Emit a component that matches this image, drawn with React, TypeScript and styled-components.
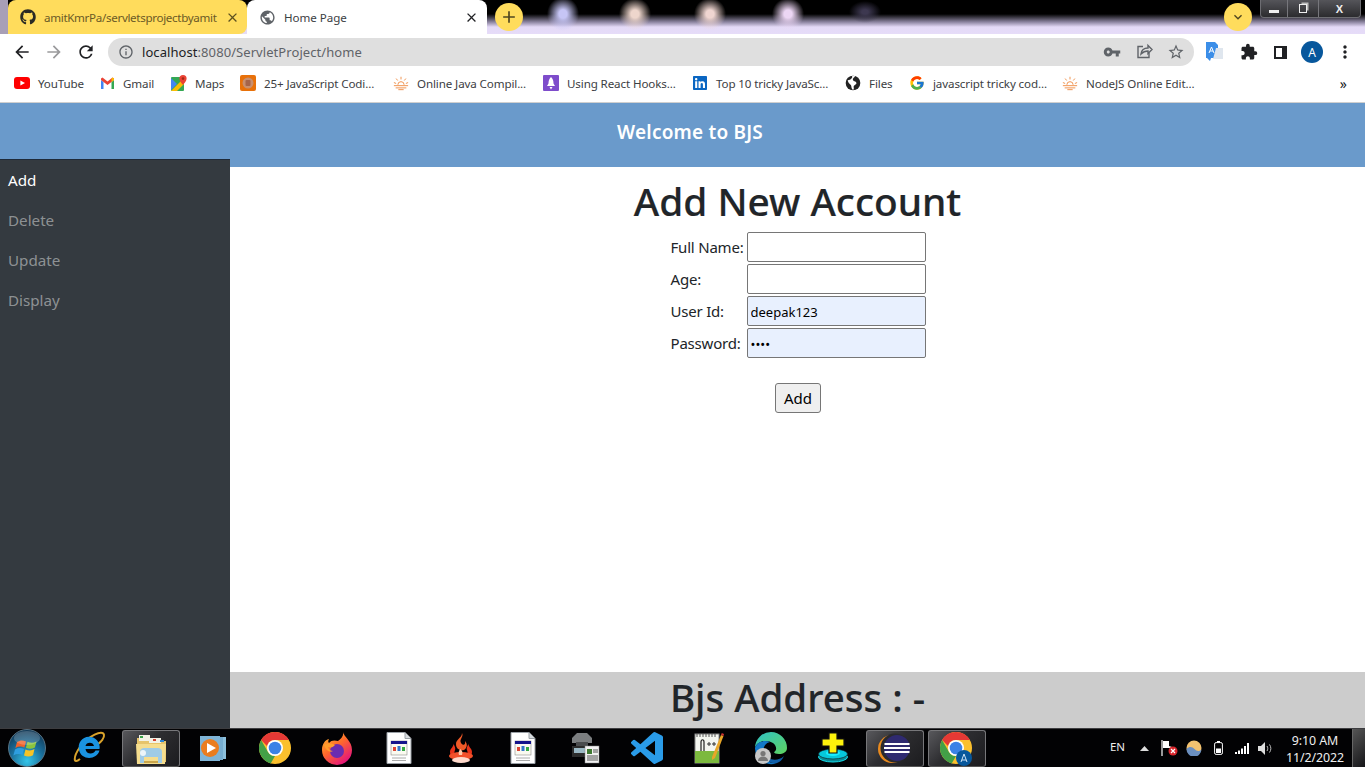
import React from "react";
import styled, { createGlobalStyle } from "styled-components";
import { FaGithub, FaLinkedin } from "react-icons/fa";
import { FcGoogle } from "react-icons/fc";
import { MdArrowBack, MdArrowForward, MdRefresh, MdInfoOutline, MdPublic, MdClose, MdAdd, MdStarBorder, MdVpnKey, MdKeyboardArrowDown, MdMoreVert, MdExtension } from "react-icons/md";

const FONT = `"Noto Sans", "Open Sans", "Liberation Sans", sans-serif`;

const Global = createGlobalStyle`
  html, body { margin: 0; padding: 0; height: 100%; overflow: hidden; }
  #root { height: 100%; }
  * { box-sizing: border-box; }
  body { font-family: ${FONT}; }
`;

const Screen = styled.div`display:flex;flex-direction:column;height:767px;width:1365px;overflow:hidden;background:#fff;`;

/* browser chrome */
const TabStrip = styled.div`
  height:34px;display:flex;align-items:stretch;padding-left:8px;position:relative;
  background:
    radial-gradient(ellipse 16px 17px at 563px 14px, #c6c5f5 25%, rgba(198,197,245,0) 100%),
    radial-gradient(ellipse 16px 16px at 635px 14px, #eed6cc 25%, rgba(238,214,204,0) 100%),
    radial-gradient(ellipse 16px 16px at 710px 14px, #efd5d0 25%, rgba(239,213,208,0) 100%),
    radial-gradient(ellipse 16px 16px at 788px 14px, #ecd6f4 25%, rgba(236,214,244,0) 100%),
    radial-gradient(ellipse 16px 11px at 865px 12px, #3d3850 20%, rgba(61,56,80,0) 100%),
    linear-gradient(90deg, #a89fb6 0, #a89fb6 8px, transparent 8px),
    linear-gradient(180deg, #000 0, #000 14px, #8c84a0 22px, #e4daf7 27px, #e6dcf8 34px);
`;
const Tab = styled.div<{ $active?: boolean }>`
  display:flex;align-items:center;font-size:11.6px;white-space:nowrap;
  width:${p => (p.$active ? 240 : 239)}px;
  padding:${p => (p.$active ? "0 8px 0 12px" : "0 7px 0 12px")};
  background:${p => (p.$active ? "#fff" : "#ffdc5c")};
  color:${p => (p.$active ? "#3c4043" : "#6b5a26")};
  border-radius:${p => (p.$active ? "8px 8px 0 0" : "8px 8px 8px 0")};
`;
const TabTitle = styled.span<{ $tight?: boolean }>`
  flex:1;margin-left:8px;letter-spacing:${p => (p.$tight ? "-0.32px" : "-0.05px")};
`;
const RoundBtn = styled.div<{ $size?: number }>`
  width:28px;height:28px;border-radius:50%;background:#ffdc5c;display:flex;align-items:center;justify-content:center;
  color:#4f4520;margin:3px 0 0 8px;font-size:${p => p.$size ?? 20}px;
`;
const Spring = styled.div`flex:1;`;
const CollapseBtn = styled(RoundBtn)`margin:3px 8px 0 0;`;
const WinControls = styled.div`
  display:flex;width:101px;height:18px;margin-right:4px;border:1px solid #6d6d72;border-top:none;border-radius:0 0 4px 4px;
  background:linear-gradient(180deg,#55555a,#2b2b2e);color:#eee;overflow:hidden;
`;
const WinBtn = styled.div<{ $w: number }>`
  width:${p => p.$w}px;display:flex;align-items:center;justify-content:center;border-right:1px solid #77777c;
  font-size:11px;font-weight:700;font-family:"Liberation Sans",sans-serif;
  &:last-child{border-right:none;}
`;
const MinGlyph = styled.div`width:10px;height:3px;background:#eee;margin-top:6px;`;
const RestoreGlyph = styled.div`
  width:8px;height:9px;border:1.5px solid #eee;box-shadow:2px -2px 0 -0.5px #bbb;
`;

const Toolbar = styled.div`height:34px;display:flex;align-items:center;background:#fff;padding:2px 0 0 6px;color:#3a3a3c;`;
const NavIcon = styled.div<{ $muted?: boolean }>`
  width:32px;display:flex;align-items:center;justify-content:center;font-size:20px;color:${p => (p.$muted ? "#9a9a9c" : "#202124")};
`;
const Omnibox = styled.div`
  width:1086px;height:28px;margin-left:6px;background:#dfdfdf;border-radius:14px;display:flex;align-items:center;padding:0 2px 0 10px;
  font-size:13px;color:#5f6368;
`;
const UrlHost = styled.span`color:#202124;`;
const UrlText = styled.span`margin-left:8px;flex:1;letter-spacing:0.07px;`;
const OmniIcon = styled.div`width:32px;display:flex;justify-content:center;color:#5f6368;font-size:18px;`;
const ExtArea = styled.div`display:flex;align-items:center;margin-left:auto;padding-right:4px;`;
const ExtIcon = styled.div`width:32px;display:flex;justify-content:center;align-items:center;font-size:18px;color:#202124;`;
const TranslateCell = styled(ExtIcon)`padding-right:6px;`;
const PanelGlyph = styled.div`width:13px;height:13px;border:2px solid #202124;border-right-width:5px;margin-right:2px;`;
const Avatar = styled.div`width:22px;height:22px;border-radius:50%;background:#07579c;color:#fff;font-size:12px;display:flex;align-items:center;justify-content:center;margin-right:2px;`;

const Bookmarks = styled.div`height:35px;display:flex;align-items:center;padding-left:14px;background:#fff;border-bottom:1px solid #cfcfcf;padding-bottom:4px;`;
const Bookmark = styled.div<{ $w: number }>`
  width:${p => p.$w}px;display:flex;align-items:center;font-size:11.6px;color:#3c4043;white-space:nowrap;flex:none;
`;
const BookmarkIcon = styled.div`width:16px;height:16px;display:flex;align-items:center;justify-content:center;flex:none;font-size:16px;`;
const BookmarkLabel = styled.span`margin-left:8px;letter-spacing:-0.12px;`;
const More = styled.div`margin-left:auto;margin-right:18px;font-size:14px;color:#202124;`;

/* page */
const Page = styled.div`
  flex:1;display:grid;grid-template-columns:230px 1fr;grid-template-rows:56px 8px 1fr;min-height:0;
`;
const Banner = styled.header`
  grid-column:1 / 3;grid-row:1 / 3;background:#6a9acb;color:#fff;display:flex;align-items:center;justify-content:center;
  padding:0 0 6px 15px;font-size:19px;font-weight:600;letter-spacing:0.2px;
`;
const Sidebar = styled.nav`
  grid-column:1;grid-row:2 / 4;background:#343a40;border-top:1px solid #1f2a38;z-index:1;display:flex;flex-direction:column;
`;
const NavItem = styled.a<{ $active?: boolean }>`
  height:40px;padding:0 8px;display:flex;align-items:center;font-size:15.2px;
  color:${p => (p.$active ? "#fff" : "rgba(255,255,255,.45)")};
`;
const Main = styled.main`grid-column:2;grid-row:3;display:flex;flex-direction:column;align-items:center;min-height:0;`;
const Heading = styled.h1`
  margin:10px 0 7px;font-size:38.8px;line-height:48px;font-weight:500;color:#212529;white-space:nowrap;-webkit-text-stroke:.2px #212529;
`;
const FormGrid = styled.form`
  display:grid;grid-template-columns:76px 179px;row-gap:2px;margin-left:1px;
`;
const FieldLabel = styled.label`font-size:15px;color:#212529;display:flex;align-items:center;height:30px;white-space:nowrap;letter-spacing:-0.2px;`;
const Input = styled.input<{ $filled?: boolean }>`
  width:179px;height:30px;border:1px solid #767676;border-radius:2px;padding:3px 3px 1px;outline:none;
  font-family:${FONT};font-size:13px;color:#000;background:${p => (p.$filled ? "#e8f0fe" : "#fff")};
`;
const SubmitButton = styled.button`
  margin:25px 0 0 1px;width:46px;height:30px;border:1px solid #767676;border-radius:3px;background:#efefef;color:#000;
  font-family:${FONT};font-size:15px;padding:0;
`;
const Footer = styled.footer`
  margin-top:auto;width:100%;height:56px;background:#ccc;text-align:center;color:#212529;font-size:38.5px;line-height:48px;font-weight:500;padding-top:1px;-webkit-text-stroke:.15px #212529;
`;

/* taskbar */
const Taskbar = styled.div`
  height:39px;flex:none;display:flex;align-items:stretch;background:#020204;border-top:1px solid #3d3d40;position:relative;
`;
const StartSlot = styled.div`width:58px;display:flex;align-items:center;justify-content:flex-start;padding-left:8px;`;
const TaskSlot = styled.div<{ $active?: boolean }>`
  width:62px;display:flex;align-items:center;justify-content:center;
  ${p => p.$active ? `
    margin:1px 2px 0;width:58px;border:1px solid #77777a;border-bottom-color:#555;border-radius:3px;
    background:linear-gradient(135deg,#58585c 0%,#2d2d30 45%,#1c1c1f 100%);
  ` : ""}
`;
const Tray = styled.div`margin-left:auto;display:flex;align-items:center;color:#eee;`;
const TrayCell = styled.div<{ $w: number }>`width:${p => p.$w}px;display:flex;align-items:center;justify-content:center;height:38px;`;
const EnLabel = styled.span`font-size:11.5px;margin-bottom:4px;`;
const Clock = styled.div`width:74px;text-align:center;font-size:12.4px;line-height:17px;color:#eee;letter-spacing:-0.1px;padding-top:2px;`;
const ShowDesktop = styled.div`width:13px;height:38px;background:linear-gradient(135deg,#555,#151518);border-left:1px solid #666;`;

/* drawn icons */
const YouTube = () => (<svg width="16" height="12" viewBox="0 0 16 12"><rect width="16" height="12" rx="3" fill="#f00" /><path d="M6.400 3.400 11 6l-4.600 2.600z" fill="#fff" /></svg>);
const Gmail = () => (<svg width="15" height="12" viewBox="0 0 15 12"><path d="M1 12V3l2.500 2v7z" fill="#4285f4" /><path d="M14 12V3l-2.500 2v7z" fill="#34a853" /><path d="M1 3 7.500 8 14 3v-1.500L12.500 .6 7.500 4.600 2.500 .6 1 1.500z" fill="#ea4335" /><path d="M11.500 5 14 3V1.500L12.500.6 11.500 1.400z" fill="#fbbc04" /></svg>);
const Maps = () => (<svg width="16" height="16" viewBox="0 0 16 16"><rect y="2" width="13" height="14" rx="1" fill="#34a853" /><path d="M0 16 13 3v6l-7 7z" fill="#fbbc04" /><path d="M0 3l6 6-6 6z" fill="#4285f4" /><path d="M12 0a3.600 3.600 0 0 0-3.600 3.600C8.400 6.400 12 10 12 10s3.600-3.600 3.600-6.400A3.600 3.600 0 0 0 12 0z" fill="#ea4335" /><circle cx="12" cy="3.600" r="1.300" fill="#a52714" /></svg>);
const OrangeBadge = () => (<svg width="16" height="16" viewBox="0 0 16 16"><rect width="16" height="16" rx="2" fill="#e8710a" /><circle cx="8" cy="8" r="5.500" fill="#c98f6e" /><rect x="5.500" y="5" width="5" height="6" rx="1" fill="#a5644a" /></svg>);
const Sun = () => (<svg width="18" height="16" viewBox="0 0 18 16" fill="none" stroke="#f0924f" strokeWidth="1.100"><path d="M5.500 10a3.500 3.500 0 0 1 7 0M9 1v3M3.500 3l1.800 2.200M14.500 3l-1.800 2.200M1 7.500l2.500 1M17 7.500l-2.500 1M1 11h16M3 13.500h12M6 15.500h6" /></svg>);
const Rocket = () => (<svg width="16" height="16" viewBox="0 0 16 16"><rect width="16" height="16" rx="1" fill="#7e4ccb" /><path d="M8 2c2 2 2.500 4 2.500 6.500L12 11H4l1.500-2.500C5.500 6 6 4 8 2z" fill="#fff" /><path d="M6.500 12h3L8 14.500z" fill="#fff" /></svg>);
const Earth = () => (<svg width="16" height="16" viewBox="0 0 24 24"><circle cx="12" cy="12" r="11" fill="#222" /><path d="M4 8c3-1 4 0 6-3s0-4 0-4l5 .5c-1 3-4 3-3 6s4 1 5 4-4 3-4 6 1 3-1 5c-3-2-2-5-3-7S5 13 4 8z" fill="#fff" /></svg>);
const ShareBox = () => (<svg width="18" height="18" viewBox="0 0 18 18" fill="none" stroke="#5f6368" strokeWidth="1.400"><path d="M8 3.500H3v11h11V10" /><path d="M6 11c.5-4 3.500-6 7-6V2.500L17 6.500l-4 4V8c-3 0-5 1-7 3z" /></svg>);
const Translate = () => (<svg width="17" height="20" viewBox="0 0 17 20"><path d="M0 0h9l3 3v13H5l-1 3-3-3H0z" fill="#3b8ee8" /><path d="M3 11l2.500-6L8 11M4 9h3" stroke="#fff" fill="none" /><path d="M10 6h7v11H7z" fill="#dfe6ee" /></svg>);

const Orb = () => (<svg width="38" height="38" viewBox="0 0 38 38">
  <defs><radialGradient id="orb" cx="50%" cy="85%" r="80%"><stop offset="0" stopColor="#35c5e8" /><stop offset=".55" stopColor="#1a6f9c" /><stop offset="1" stopColor="#123a58" /></radialGradient></defs>
  <circle cx="19" cy="19" r="18.500" fill="url(#orb)" stroke="#6a8596" strokeWidth=".8" />
  <path d="M9 13c3-2 6-2 9-.6l-1.600 6.200c-3-1.400-6-1.400-9 .4z" fill="#f0622a" />
  <path d="M19.500 12.800c3 1.400 6 1.400 9-.4l-1.600 6c-3 1.800-6 1.800-9 .4z" fill="#8bc43f" />
  <path d="M7 20.500c3-1.800 6-1.800 9-.4L14.400 26c-3-1.400-6-1.200-9 .5z" fill="#2e9ee0" />
  <path d="M17.500 20.400c3 1.400 6 1.400 9-.3L25 26.200c-3 1.700-6 1.700-9 .3z" fill="#f7c325" />
  <ellipse cx="19" cy="9" rx="13" ry="7" fill="#fff" opacity=".2" />
</svg>);
const IE = () => (<svg width="34" height="34" viewBox="0 0 34 34" fill="none">
  <path d="M8 28C1 34 1 26 8 16 16 5 31-2 32 4c.5 3-3 7-6 9" stroke="#d9a22b" strokeWidth="2" />
  <path d="M7 19a10.500 10.500 0 1 1 20.500-1H13.500c.5 5.500 8 6 10 1.500h4C25 29 9.500 30 7 19zm6.500-4H22c-.5-4.500-8-4.500-8.500 0z" fill="#1a93e0" />
</svg>);
const Explorer = () => (<svg width="34" height="32" viewBox="0 0 34 32">
  <path d="M3 5h12l2 3h15v21H3z" fill="#e6c46b" /><rect x="5" y="2" width="11" height="6" fill="#f2f2e6" /><rect x="6" y="3" width="3" height="2" fill="#3aa34a" />
  <rect x="15" y="5" width="12" height="5" fill="#f2f2e6" /><rect x="19" y="6" width="3" height="2" fill="#d4412f" /><rect x="26" y="7" width="4" height="2" fill="#2f86d4" />
  <path d="M2 11h30l-1 20H3z" fill="#f5dd8e" /><path d="M6 19c0-3 2-4 4-4h14c2 0 4 1 4 4v11h-4v-6H10v6H6z" fill="#9fcbe6" /><circle cx="9" cy="20" r="3" fill="#fff" opacity=".8" /><rect x="10" y="28" width="14" height="2" fill="#caa64c" />
</svg>);
const Media = () => (<svg width="28" height="28" viewBox="0 0 28 28"><rect x="6" y="3" width="21" height="22" fill="#8cc0dc" /><rect x="3" y="3" width="21" height="23" fill="#76add0" /><rect x="1" y="2" width="20" height="25" fill="#7fb4d6" /><circle cx="11" cy="14" r="9" fill="#ea7d1f" /><path d="M8 9l9 5-9 5z" fill="#fff" /></svg>);
const Chrome = ({ size = 32 }: { size?: number }) => (<svg width={size} height={size} viewBox="0 0 32 32">
  <circle cx="16" cy="16" r="16" fill="#fbc02d" />
  <path d="M16 0a16 16 0 0 1 13.900 8H16a8 8 0 0 0-7.800 6.200L2.100 8A16 16 0 0 1 16 0z" fill="#e53935" />
  <path d="M2.100 8 9 20a8 8 0 0 0 7 4l-4.300 7.400A16 16 0 0 1 2.100 8z" fill="#43a047" />
  <circle cx="16" cy="16" r="8" fill="#fff" /><circle cx="16" cy="16" r="6.300" fill="#3b82e6" />
</svg>);
const Firefox = () => (<svg width="32" height="34" viewBox="0 0 32 34">
  <defs><linearGradient id="fx" x1="0" y1="0" x2=".7" y2="1"><stop offset="0" stopColor="#ffc62e" /><stop offset=".5" stopColor="#ff6a2b" /><stop offset="1" stopColor="#e3127e" /></linearGradient></defs>
  <path d="M22 1c1 5 9 9 9 18a15 15 0 0 1-30 0C1 13 4 9 8 8c-1 2-1 3 0 4 2-3 6-3 9-2 3-2 6-5 5-9z" fill="url(#fx)" />
  <circle cx="16" cy="20" r="7" fill="#6a2cb0" /><path d="M3 14c3-2 8-2 11 0-2 2-3 3-7 2 1 3 3 4 5 4-3 2-7 0-9-6z" fill="#ff9d2b" />
</svg>);
const DocIcon = () => (<svg width="26" height="32" viewBox="0 0 26 32"><path d="M1 .5h18l6 6v25H1z" fill="#fff" stroke="#9aa0a6" /><path d="M19 .5v6h6" fill="#d8dce0" stroke="#9aa0a6" /><rect x="5" y="9" width="16" height="14" fill="#fafaf0" stroke="#777" strokeWidth=".5" /><rect x="5" y="9" width="16" height="3" fill="#14148c" /><path d="M7 15h3v4H7z" fill="#d43" /><path d="M11.500 14h3v5h-3z" fill="#37c" /><path d="M16 15h3v4h-3z" fill="#3a4" /><path d="M6 26h14M6 28.500h14" stroke="#aaa" /></svg>);
const Flame = () => (<svg width="28" height="32" viewBox="0 0 28 32">
  <path d="M15 1c2 4-3 6-1 10 2 3 5 2 4-2 3 3 2 7-1 9-4 1-8-1-8-6 0-5 6-6 6-11z" fill="#f05a28" />
  <path d="M6 11c2 3-3 5-3 9s4 6 7 6c-3-3-3-5-2-8 1-2-1-5-2-7z" fill="#e8331a" />
  <path d="M22 11c-2 3 3 5 3 9s-4 6-7 6c3-3 3-5 2-8-1-2 1-5 2-7z" fill="#e8331a" />
  <ellipse cx="14" cy="24" rx="12" ry="4" fill="#f2502a" />
  <ellipse cx="14" cy="28" rx="9" ry="3" fill="#ffd9cb" />
  <path d="M13 17c2 1 3 3 2 6h-3c-1-2 0-4 1-6z" fill="#ffc9a8" />
</svg>);
const Scanner = () => (<svg width="32" height="32" viewBox="0 0 32 32"><path d="M8 1h10l5 5v5H3V6z" fill="#7b7e80" /><rect x="7" y="10" width="12" height="4" fill="#4a4c4e" /><rect x="3" y="14" width="21" height="11" fill="#2c2c2c" /><rect x="5" y="16" width="17" height="5" fill="#9bb8c4" /><rect x="16" y="14" width="14" height="17" fill="#f2f2f2" stroke="#888" strokeWidth=".5" /><rect x="18" y="17" width="5" height="5" fill="#3f7a33" /><path d="M24 18h5M24 20h5M18 24h11M18 26h11M18 28h11" stroke="#555" /></svg>);
const VSCode = () => (<svg width="32" height="32" viewBox="0 0 24 24"><path fill="#2a9be8" d="M23.150 2.587L18.210.21a1.494 1.494 0 0 0-1.705.29l-9.460 8.630-4.120-3.128a.999.999 0 0 0-1.276.057L.327 7.261A1 1 0 0 0 .326 8.740L3.899 12 .326 15.260a1 1 0 0 0 .001 1.479L1.650 17.940a.999.999 0 0 0 1.276.057l4.120-3.128 9.460 8.630a1.492 1.492 0 0 0 1.704.29l4.942-2.377A1.500 1.500 0 0 0 24 20.060V3.939a1.500 1.500 0 0 0-.850-1.352zm-5.146 14.861L10.826 12l7.178-5.448v10.896z" /></svg>);
const NotepadPP = () => (<svg width="30" height="32" viewBox="0 0 30 32"><rect x="1" y="2" width="24" height="29" fill="#f4f6f0" stroke="#888" /><rect x="1" y="19" width="24" height="12" fill="#7cb93e" /><path d="M3 2v3M6 2v3M9 2v3M12 2v3M15 2v3M18 2v3M21 2v3" stroke="#555" /><path d="M7 19V10c0-3 3-3 3 0v9" stroke="#222" strokeWidth="1.200" fill="none" /><path d="M13 12h4M15 10v4M18 12h4M20 10v4" stroke="#333" /><path d="M18 25 27 3l2.500 1L21 26l-3 2z" fill="#e9a627" /><path d="M27 3l.8-2 2.200 1-.5 2z" fill="#c33" /></svg>);
const Edge = () => (<svg width="34" height="34" viewBox="0 0 34 34">
  <defs><linearGradient id="ed" x1="0" y1="0" x2="1" y2="1"><stop offset="0" stopColor="#2fc2c7" /><stop offset="1" stopColor="#5fd35f" /></linearGradient></defs>
  <path d="M1 17a16 16 0 0 1 32 0c0 4-4 6-8 6-3 0-5-1-5-2 3-1 3-6-1-9C13 8 3 10 1 17z" fill="url(#ed)" />
  <path d="M1 17c2-7 10-8 15-6-5 1-8 6-6 13 2 6 7 9 13 8A16 16 0 0 1 1 17z" fill="#1278c8" />
  <path d="M23 32c-6 1-11-2-13-8 4 5 14 7 20 1-2 4-4 6-7 7z" fill="#0f5ea8" />
  <circle cx="9" cy="25" r="8" fill="#c8c8c8" /><circle cx="9" cy="22.500" r="2.600" fill="#777" /><path d="M4 30c0-6 10-6 10 0z" fill="#777" />
</svg>);
const YellowPlus = () => (<svg width="32" height="32" viewBox="0 0 32 32"><ellipse cx="16" cy="25" rx="14.500" ry="5" fill="#0a8a96" stroke="#15e0ee" /><ellipse cx="16" cy="22" rx="14.500" ry="5" fill="#06c8dc" stroke="#111" strokeWidth=".6" /><ellipse cx="16" cy="21" rx="7" ry="3" fill="#18f0ff" /><path d="M12 1h8v6h7v7h-7v7h-8v-7H5V7h7z" fill="#fdf20c" stroke="#111" strokeWidth="1.200" /></svg>);
const Eclipse = () => (<svg width="34" height="34" viewBox="0 0 34 34"><circle cx="14" cy="17" r="14" fill="#e98a1e" /><circle cx="17" cy="16" r="14.500" fill="#2a2a2e" /><circle cx="19" cy="16" r="13" fill="#2f2a70" /><path d="M6.500 12h25M6 16h26M6.500 20h25" stroke="#fff" strokeWidth="1.800" /></svg>);
const ChromeProfile = () => (<svg width="40" height="36" viewBox="0 0 40 36"><g transform="translate(3 1)"><Chrome size={32} /></g><circle cx="27" cy="27" r="8" fill="#07579c" /><path d="M24 31l3-8 3 8M25 29h4" stroke="#cfe3f5" strokeWidth="1" fill="none" /></svg>);

const TrayArrow = () => (<svg width="9" height="5" viewBox="0 0 9 5"><path d="M0 5 4.500 0 9 5z" fill="#ddd" /></svg>);
const TrayFlag = () => (<svg width="18" height="16" viewBox="0 0 18 16"><path d="M1 0v16" stroke="#fff" strokeWidth="1.200" /><path d="M2 1h6v5l3 1v1H2z" fill="#fff" /><circle cx="12" cy="11" r="4.500" fill="#d8262c" /><path d="M10 9l4 4M14 9l-4 4" stroke="#fff" strokeWidth="1.200" /></svg>);
const TrayDisc = () => (<svg width="16" height="16" viewBox="0 0 16 16"><circle cx="8" cy="8" r="7.500" fill="#f3c270" /><path d="M.5 9c3-3 6-2 8 0s4 3 7 .5A7.500 7.500 0 0 1 .5 9z" fill="#6b8fbf" /></svg>);
const TrayBattery = () => (<svg width="9" height="14" viewBox="0 0 9 14"><rect x=".6" y="1.600" width="7.800" height="11.800" rx="1.500" fill="none" stroke="#fff" /><rect x="3" y="0" width="3" height="1.500" fill="#fff" /><rect x="2" y="7.500" width="5" height="4.500" fill="#fff" /></svg>);
const TraySignal = () => (<svg width="15" height="11" viewBox="0 0 15 11"><rect x="0" y="9" width="2" height="2" fill="#fff" /><rect x="3" y="7.500" width="2" height="3.500" fill="#fff" /><rect x="6" y="5.500" width="2" height="5.500" fill="#fff" /><rect x="9" y="3" width="2" height="8" fill="#fff" /><rect x="12" y="0" width="2" height="11" fill="#fff" /></svg>);
const TraySpeaker = () => (<svg width="16" height="13" viewBox="0 0 16 13"><path d="M0 4h3l4-4v13L3 9H0z" fill="#ddd" /><path d="M9 4c1 1.500 1 3.500 0 5M11.500 2.500c1.800 2.500 1.800 5.500 0 8" stroke="#bbb" fill="none" /></svg>);

const bookmarks = [
  { w: 85, icon: <YouTube />, label: "YouTube" },
  { w: 72, icon: <Gmail />, label: "Gmail" },
  { w: 69, icon: <Maps />, label: "Maps" },
  { w: 153, icon: <OrangeBadge />, label: "25+ JavaScript Codi..." },
  { w: 150, icon: <Sun />, label: "Online Java Compil..." },
  { w: 149, icon: <Rocket />, label: "Using React Hooks..." },
  { w: 153, icon: <FaLinkedin color="#0a66c2" />, label: "Top 10 tricky JavaSc..." },
  { w: 64, icon: <Earth />, label: "Files" },
  { w: 153, icon: <FcGoogle />, label: "javascript tricky cod..." },
  { w: 150, icon: <Sun />, label: "NodeJS Online Edit..." },
];

const fields = [
  { label: "Full Name:", type: "text", value: "" },
  { label: "Age:", type: "text", value: "" },
  { label: "User Id:", type: "text", value: "deepak123" },
  { label: "Password:", type: "password", value: "1234" },
];

const nav = ["Add", "Delete", "Update", "Display"];

const tasks: { icon: React.ReactNode; active?: boolean }[] = [
  { icon: <IE /> }, { icon: <Explorer />, active: true }, { icon: <Media /> }, { icon: <Chrome /> }, { icon: <Firefox /> },
  { icon: <DocIcon /> }, { icon: <Flame /> }, { icon: <DocIcon /> }, { icon: <Scanner /> }, { icon: <VSCode /> },
  { icon: <NotepadPP /> }, { icon: <Edge /> }, { icon: <YellowPlus /> }, { icon: <Eclipse />, active: true }, { icon: <ChromeProfile />, active: true },
];

export default function App() {
  return (
    <Screen>
      <Global />
      <TabStrip>
        <Tab>
          <FaGithub size={16} color="#2b2b24" />
          <TabTitle $tight>amitKmrPa/servletsprojectbyamit</TabTitle>
          <MdClose size={15} color="#5d5120" />
        </Tab>
        <Tab $active>
          <MdPublic size={17} color="#5f6368" />
          <TabTitle>Home Page</TabTitle>
          <MdClose size={15} color="#202124" />
        </Tab>
        <RoundBtn><MdAdd /></RoundBtn>
        <Spring />
        <CollapseBtn $size={16}><MdKeyboardArrowDown /></CollapseBtn>
        <WinControls>
          <WinBtn $w={28}><MinGlyph /></WinBtn>
          <WinBtn $w={31}><RestoreGlyph /></WinBtn>
          <WinBtn $w={42}>X</WinBtn>
        </WinControls>
      </TabStrip>

      <Toolbar>
        <NavIcon><MdArrowBack /></NavIcon>
        <NavIcon $muted><MdArrowForward /></NavIcon>
        <NavIcon><MdRefresh /></NavIcon>
        <Omnibox>
          <MdInfoOutline size={16} />
          <UrlText><UrlHost>localhost</UrlHost>:8080/ServletProject/home</UrlText>
          <OmniIcon><MdVpnKey /></OmniIcon>
          <OmniIcon><ShareBox /></OmniIcon>
          <OmniIcon><MdStarBorder /></OmniIcon>
        </Omnibox>
        <ExtArea>
          <TranslateCell><Translate /></TranslateCell>
          <ExtIcon><MdExtension /></ExtIcon>
          <ExtIcon><PanelGlyph /></ExtIcon>
          <ExtIcon><Avatar>A</Avatar></ExtIcon>
          <ExtIcon><MdMoreVert size={20} /></ExtIcon>
        </ExtArea>
      </Toolbar>

      <Bookmarks>
        {bookmarks.map(b => (
          <Bookmark key={b.label} $w={b.w}>
            <BookmarkIcon>{b.icon}</BookmarkIcon>
            <BookmarkLabel>{b.label}</BookmarkLabel>
          </Bookmark>
        ))}
        <More>»</More>
      </Bookmarks>

      <Page>
        <Banner>Welcome to BJS</Banner>
        <Sidebar>
          {nav.map((n, i) => <NavItem key={n} $active={i === 0}>{n}</NavItem>)}
        </Sidebar>
        <Main>
          <Heading>Add New Account</Heading>
          <FormGrid>
            {fields.map(f => (
              <React.Fragment key={f.label}>
                <FieldLabel>{f.label}</FieldLabel>
                <Input type={f.type} defaultValue={f.value} $filled={!!f.value} />
              </React.Fragment>
            ))}
          </FormGrid>
          <SubmitButton type="button">Add</SubmitButton>
          <Footer>Bjs Address : -</Footer>
        </Main>
      </Page>

      <Taskbar>
        <StartSlot><Orb /></StartSlot>
        {tasks.map((t, i) => <TaskSlot key={i} $active={t.active}>{t.icon}</TaskSlot>)}
        <Tray>
          <TrayCell $w={25}><EnLabel>EN</EnLabel></TrayCell>
          <TrayCell $w={28}><TrayArrow /></TrayCell>
          <TrayCell $w={24}><TrayFlag /></TrayCell>
          <TrayCell $w={24}><TrayDisc /></TrayCell>
          <TrayCell $w={24}><TrayBattery /></TrayCell>
          <TrayCell $w={24}><TraySignal /></TrayCell>
          <TrayCell $w={24}><TraySpeaker /></TrayCell>
          <Clock>9:10 AM<br />11/2/2022</Clock>
          <ShowDesktop />
        </Tray>
      </Taskbar>
    </Screen>
  );
}
